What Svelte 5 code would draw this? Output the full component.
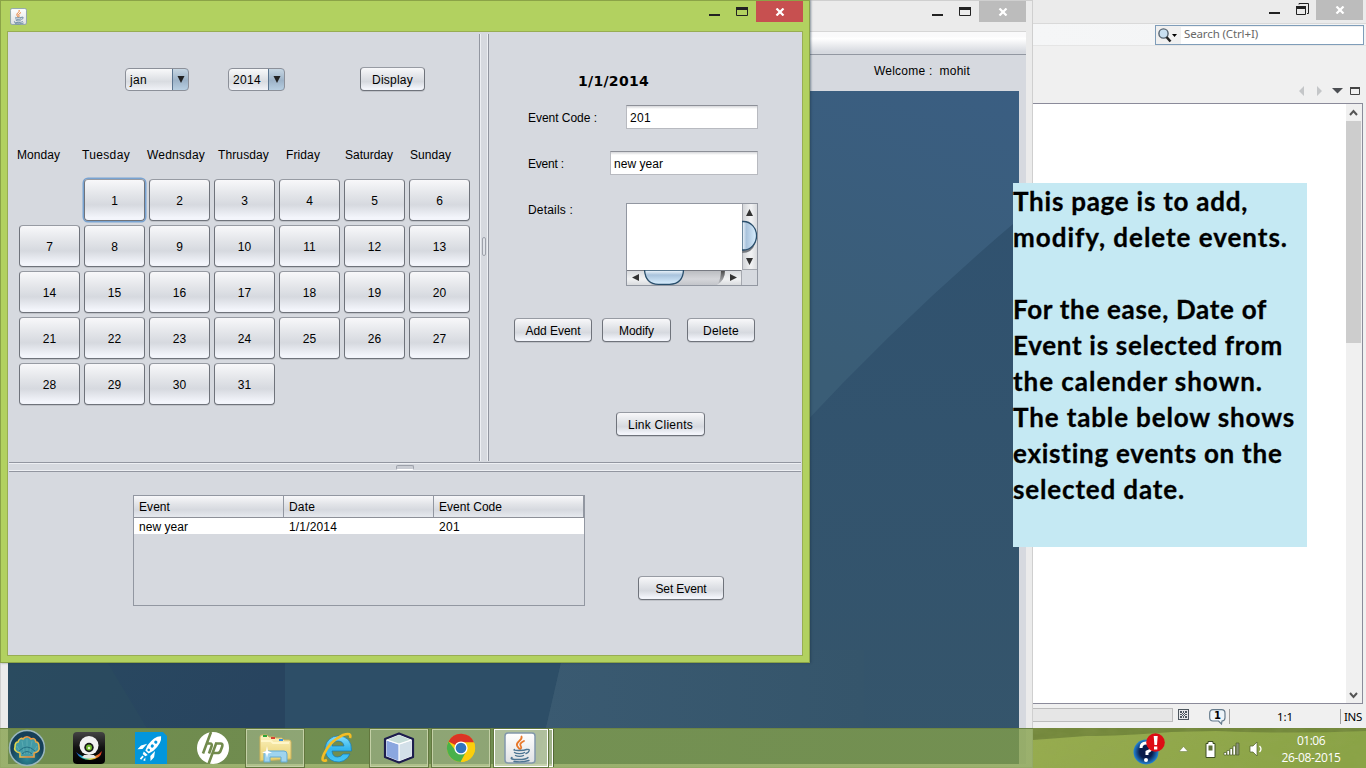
<script>
  const weekdays = [
    { name: 'Monday', w: 43, pad: 0 },
    { name: 'Tuesday', w: 48, pad: 0 },
    { name: 'Wednsday', w: 58, pad: 0 },
    { name: 'Thrusday', w: 51, pad: 6 },
    { name: 'Friday', w: 34, pad: 9 },
    { name: 'Saturday', w: 48, pad: 3 },
    { name: 'Sunday', w: 41, pad: 3 },
  ];
  const days = Array.from({ length: 31 }, (_, i) => i + 1);
  const note = [
    ['This page is to add,', 235],
    ['modify, delete events.', 275],
    ['', 0],
    ['For the ease, Date of', 254],
    ['Event is selected from', 270],
    ['the calender shown.', 250],
    ['The table below shows', 282],
    ['existing events on the', 270],
    ['selected date.', 172],
  ];

  // Tracks a label out or in so that it fills the given width.
  function fit(node, width) {
    if (!width) return;
    const gap = (width - node.getBoundingClientRect().width) / node.textContent.length;
    node.style.letterSpacing = `${gap}px`;
  }
</script>

{#snippet winButtons(kind)}
  <svg class="min" width="12" height="20" viewBox="0 0 12 20"><path d="M0 13h11v2H0z" fill="#222" /></svg>
  <svg class="max" width="14" height="20" viewBox="0 0 14 20">
    {#if kind === 'restore'}
      <path d="M3 5.500V4.500h9.500v10H11" fill="none" stroke="#222" /><path d="M.5 7.500h9v8h-9z" fill="none" stroke="#222" /><path d="M0 7h10v3H0z" fill="#222" />
    {:else}
      <path d="M.5 6.500h11v8h-11z" fill="none" stroke="#222" /><path d="M0 6h12v3H0z" fill="#222" />
    {/if}
  </svg>
  <span class="close {kind}">
    <svg width="10" height="8" viewBox="0 0 10 8"><path d="M1.500 .5l7 7M8.500 .5l-7 7" stroke="#fff" stroke-width="2.200" /></svg>
  </span>
{/snippet}

{#snippet java(size)}
  <svg width={size} height={size} viewBox="0 0 32 32">
    <defs><linearGradient id="jv" x2="0" y2="1"><stop stop-color="#fff" /><stop offset="1" stop-color="#dfe1e3" /></linearGradient></defs>
    <rect x="1" y="1" width="30" height="30" rx="3" fill="url(#jv)" stroke="#8298ac" stroke-width="1.500" />
    <g fill="none" stroke-linecap="round">
      <path d="M17.500 4.500c1.500 4-6 5-4.500 9 .5 1.500 2 2.500 2 3M20 9c-4 2-4.500 3.500-3 5.500.8 1-.2 2-1 2.500" stroke="#e8782a" stroke-width="1.800" />
      <path d="M10.500 17.500c-3 1 9 1.500 12 0M10.500 20.500c2 1.500 8 1.500 10 0M11.500 23.500c2 1.200 6 1.200 8 0M8 25.500c-5 2.500 14 3 16 0M23 17.500c4-1 2 3-1 4M10 29.500c5 .7 11 .3 15-1" stroke="#4d7592" stroke-width="1.400" />
    </g>
  </svg>
{/snippet}

<main>
  <section class="ide">
    <header class="ide-title">{@render winButtons('restore')}</header>
    <div class="ide-tools">
      <div class="search">
        <svg width="24" height="17" viewBox="0 0 24 17"><circle cx="7.500" cy="6.500" r="4.600" fill="#c9dff0" stroke="#556370" stroke-width="1.400" /><path d="M10.500 10l4 4.500" stroke="#222" stroke-width="2.500" /><path d="M16 7h5l-2.500 3z" fill="#000" /></svg>
        <span class="search-text"><span use:fit={74}>Search (Ctrl+I)</span></span>
      </div>
    </div>
    <div class="tab-strip">
      <svg width="64" height="12" viewBox="0 0 64 12">
        <path d="M6 1v10L1 6zM19 1v10l5-5z" fill="#c4c6c8" /><path d="M34 3h11l-5.500 5.500z" fill="#4c4f53" /><path d="M52.500 2.500h9v7h-9z" fill="none" stroke="#444" /><path d="M52 2h10v2H52z" fill="#444" />
      </svg>
    </div>
    <div class="editor">
      <div class="page"></div>
      <div class="vbar">
        <svg width="15" height="17" viewBox="0 0 15 17"><path d="M4 11l3.500-4 3.500 4" fill="none" stroke="#555" stroke-width="2" /></svg>
        <i></i>
        <svg class="down" width="15" height="17" viewBox="0 0 15 17"><path d="M4 7l3.500 4L11 7" fill="none" stroke="#555" stroke-width="2" /></svg>
      </div>
    </div>
    <footer class="status">
      <div class="progress"></div>
      <svg class="cancel" width="11" height="11" viewBox="0 0 11 11"><rect x=".5" y=".5" width="10" height="10" fill="#e6e8ea" stroke="#4d565e" /><path d="M2 2h2v2H2zM5 2h1v2H5zM7 2h2v2H7zM4 4h1v1H4zM6 4h1v1H6zM2 5h2v1H2zM5 5h1v1H5zM7 5h2v1H7zM4 6h1v1H4zM6 6h1v1H6zM2 7h2v2H2zM5 7h1v2H5zM7 7h2v2H7z" fill="#4d565e" /></svg>
      <div class="bubble">
        <svg width="17" height="16" viewBox="0 0 17 16"><path d="M4 .7h8.500q3.500 0 3.500 3.500v4.500q0 3-3 3.300l-.5 3-3-3H4Q.7 12 .7 8.500V4.200Q.7.700 4 .7z" fill="#edf5fa" stroke="#667b8c" stroke-width="1.200" /></svg>
        <b>1</b>
      </div>
      <div class="caret"><span use:fit={16}>1:1</span></div>
      <div class="ins"><span use:fit={18}>INS</span></div>
    </footer>
  </section>

  <section class="client">
    <header class="client-title">{@render winButtons('grey')}</header>
    <div class="client-body">
      <div class="menubar"></div>
      <div class="welcome"><span use:fit={96}>Welcome :&nbsp; mohit</span></div>
      <svg class="backdrop" width="1011" height="673" viewBox="8 91 1011 673" preserveAspectRatio="none">
        <defs>
          <linearGradient id="hi" x1="1" y1="0" x2=".75" y2="1"><stop stop-color="#3a5e82" /><stop offset="1" stop-color="#3a5d76" /></linearGradient>
          <linearGradient id="lo" x2="0" y2="1"><stop stop-color="#2f5170" /><stop offset="1" stop-color="#35556b" /></linearGradient>
          <linearGradient id="lf" x2="1" y2=".4"><stop stop-color="#294a61" /><stop offset="1" stop-color="#28445f" /></linearGradient>
          <linearGradient id="mid"><stop stop-color="#3a5a71" /><stop offset="1" stop-color="#35556b" /></linearGradient>
        </defs>
        <path d="M8 91h1011v673H8z" fill="url(#lo)" />
        <path d="M800 91h219v128Q905 315 800 428z" fill="url(#hi)" />
        <path d="M8 600h277v164H8z" fill="url(#lf)" />
        <path d="M100 650l48 80v34H8V650z" fill="#2c4d60" opacity=".45" />
        <path d="M285 600h290l-14 63-15 65-8 36H285z" fill="#2d4e67" />
        <path d="M564 650h300v114H538l8-36 15-65z" fill="url(#mid)" />
      </svg>
    </div>
  </section>

  <section class="event-win">
    <header class="win-title">
      <span class="app-icon">{@render java(17)}</span>
      {@render winButtons('red')}
    </header>
    <div class="win-body">
      <div class="upper">
        <div class="calendar">
          <div class="pickers">
            <div class="combo month"><span use:fit={17}>jan</span><i><svg width="8" height="7"><path d="M.5 0h7L4 7z" fill="#222" /></svg></i></div>
            <div class="combo year"><span use:fit={28}>2014</span><i><svg width="8" height="7"><path d="M.5 0h7L4 7z" fill="#222" /></svg></i></div>
            <button class="display"><span use:fit={41}>Display</span></button>
          </div>
          <div class="weekdays">
            {#each weekdays as d}
              <div style="padding-left: {d.pad}px"><span use:fit={d.w}>{d.name}</span></div>
            {/each}
          </div>
          <div class="days">
            {#each days as n}
              <button class:focus={n === 1}>{n}</button>
            {/each}
          </div>
        </div>
        <div class="vsplit"><i></i></div>
        <div class="form">
          <h1><span use:fit={71}>1/1/2014</span></h1>
          <div class="field code"><label for="code"><span use:fit={69}>Event Code :</span></label><div id="code" class="input"><span use:fit={21}>201</span></div></div>
          <div class="field name"><label for="name"><span use:fit={36}>Event :</span></label><div id="name" class="input"><span use:fit={49}>new year</span></div></div>
          <div class="field details">
            <label for="details"><span use:fit={45}>Details :</span></label>
            <div id="details" class="area">
              <div class="paper"></div>
              <svg class="sv" width="15" height="66" viewBox="0 0 15 66">
                <defs>
                  <linearGradient id="tr"><stop stop-color="#d0d2d6" /><stop offset=".6" stop-color="#f2f3f4" /><stop offset="1" stop-color="#d9dbde" /></linearGradient>
                  <linearGradient id="tv"><stop stop-color="#f5fbff" /><stop offset=".3" stop-color="#a9c3dc" /><stop offset="1" stop-color="#d9efff" /></linearGradient>
                </defs>
                <path d="M0 0h15v66H0z" fill="url(#tr)" /><path d="M.5 0v66M0 65.500h15" stroke="#a5a8af" />
                <path d="M0 40h13q-3 9-13 9z" fill="#777a80" />
                <path d="M0 17.500h1.500a13 14.200 0 0 1 0 28.500H0z" fill="url(#tv)" stroke="#294e6b" stroke-width="1.300" />
                <path d="M4 12l3.500-7 3.500 7zM4 54l3.500 7 3.500-7z" fill="#333" />
              </svg>
              <svg class="sh" width="115" height="15" viewBox="0 0 115 15">
                <defs>
                  <linearGradient id="trh" x2="0" y2="1"><stop stop-color="#b8babe" /><stop offset=".6" stop-color="#d5d6da" /><stop offset="1" stop-color="#c3c5ca" /></linearGradient>
                  <linearGradient id="btn" x2="0" y2="1"><stop stop-color="#d6d8dc" /><stop offset=".6" stop-color="#f2f3f4" /><stop offset="1" stop-color="#d9dbde" /></linearGradient>
                  <linearGradient id="th" x2="0" y2="1"><stop stop-color="#f5fbff" /><stop offset=".35" stop-color="#a9c3dc" /><stop offset="1" stop-color="#d9efff" /></linearGradient>
                  <linearGradient id="sd" x2="0" y2="1"><stop stop-color="#444" /><stop offset="1" stop-color="#c3c5ca" /></linearGradient>
                </defs>
                <path d="M0 0h115v15H0z" fill="url(#trh)" />
                <path d="M0 0h17q2 12 8 15H0zM98 0h17v15H90q8-5 8-15z" fill="url(#btn)" />
                <path d="M94 0h4q0 10-7 14 3-6 3-14z" fill="url(#sd)" /><path d="M0 .5h115" stroke="#777a82" /><path d="M114.500 0v15" stroke="#a5a8af" />
                <path d="M17.500 0q1 14.300 14 14.300h11Q56 14 56.500 0z" fill="url(#th)" stroke="#294e6b" stroke-width="1.300" />
                <path d="M12 4L5 7.500l7 3.500zM103 4l7 3.500-7 3.500z" fill="#333" />
              </svg>
              <div class="corner"></div>
            </div>
          </div>
          <div class="actions">
            <button class="add"><span use:fit={55}>Add Event</span></button>
            <button class="modify"><span use:fit={35}>Modify</span></button>
            <button class="delete"><span use:fit={36}>Delete</span></button>
          </div>
          <button class="link"><span use:fit={65}>Link Clients</span></button>
        </div>
      </div>
      <div class="hsplit"><i></i></div>
      <div class="lower">
        <div class="table">
          <div class="thead"><div><span use:fit={31}>Event</span></div><div><span use:fit={26}>Date</span></div><div><span use:fit={63}>Event Code</span></div></div>
          <div class="trow"><div><span use:fit={49}>new year</span></div><div><span use:fit={48}>1/1/2014</span></div><div><span use:fit={21}>201</span></div></div>
        </div>
        <button class="set"><span use:fit={51}>Set Event</span></button>
      </div>
    </div>
  </section>

  <aside class="note">
    {#each note as [text, width]}
      <p><span use:fit={width}>{text}</span></p>
    {/each}
  </aside>

  <nav class="taskbar">
    <div class="grass">
      <svg width="333" height="40" viewBox="0 0 333 40" preserveAspectRatio="none">
        <defs>
          <filter id="turf" x="0" y="0" width="100%" height="100%"><feTurbulence type="fractalNoise" baseFrequency=".06 .15" numOctaves="3" seed="4" /><feColorMatrix values="0 0 0 0 .3  0 0 0 0 .38  0 0 0 0 .1  .9 0 0 0 -.3" /></filter>
          <linearGradient id="gr" x2="1" y2=".1"><stop stop-color="#97ac4f" /><stop offset="1" stop-color="#8aa346" /></linearGradient>
        </defs>
        <path d="M0 0h333v40H0z" fill="url(#gr)" />
        <path d="M0 0h333v3q-80 3-150 0l-45 1q-50 4-85 4L0 12z" fill="#6c8038" opacity=".8" />
        <path d="M0 0h333v40H0z" filter="url(#turf)" opacity=".4" />
      </svg>
    </div>
    <div class="slot orb">
      <svg width="38" height="38" viewBox="0 0 38 38">
        <defs><radialGradient id="ob" cy=".8"><stop stop-color="#2c8796" /><stop offset="1" stop-color="#153f58" /></radialGradient><linearGradient id="shell"><stop stop-color="#e3dd4d" /><stop offset=".55" stop-color="#f08a3c" /><stop offset="1" stop-color="#e9b649" /></linearGradient></defs>
        <circle cx="19" cy="19" r="17.500" fill="url(#ob)" stroke="#9ab7bd" stroke-width="1.500" />
        <path d="M12 28v-4c-5-1-6-4-5-6 0-4 2-5 3-5 1-4 4-4 5-3 2-3 6-3 8 0 2-1 4-1 5 3 2 0 3 2 3 5 1 3-1 5-5 6v4z" fill="#439aa5" stroke="url(#shell)" stroke-width="1.600" />
        <path d="M14 26L9 17M16.500 25L14 12M19 25V10M21.500 25L24 12M24 26l5-9" stroke="#6ab5ba" stroke-width=".6" /><path d="M11 22q8-8 16 0M14 25q5-5 10 0" fill="none" stroke="#236f82" />
      </svg>
    </div>
    <div class="slot cam">
      <svg width="32" height="32" viewBox="0 0 32 32">
        <defs><linearGradient id="cm" x2="0" y2="1"><stop stop-color="#444" /><stop offset=".5" stop-color="#111" /><stop offset="1" /></linearGradient><linearGradient id="rb"><stop stop-color="#204ed8" /><stop offset=".3" stop-color="#23c5bb" /><stop offset=".6" stop-color="#e7d734" /><stop offset="1" stop-color="#e02b20" /></linearGradient></defs>
        <rect width="32" height="32" rx="4" fill="url(#cm)" />
        <path d="M3 20q4 8 14 8 11-1 12-9-5 6-13 6-8 0-13-5z" fill="url(#rb)" />
        <circle cx="16" cy="13.500" r="9.500" fill="#f1f1f1" /><path d="M11 23h10l2 2.500q-7 2-14 0z" fill="#e6e6e6" /><circle cx="16" cy="15.500" r="4.700" fill="#181818" /><circle cx="16" cy="15.500" r="3" fill="#6ab52b" /><circle cx="16" cy="16" r="1.300" fill="#eafbd0" />
      </svg>
    </div>
    <div class="slot rocket">
      <svg width="32" height="32" viewBox="0 0 32 32">
        <path d="M0 0h28l4 4v28H0z" fill="#0296dc" />
        <g transform="translate(15.500 16) rotate(42) scale(.88) translate(-16 -17)"><path d="M16-1q6 5 4.500 18l-2 6h-5l-2-6Q10 4 16-1zM10 16v8l-4 4v-6zM22 16v8l4 4v-6zM13 25h6l-1 3h-4zM11.500 29l1.500 4M15.500 29.500h1.500v4.500h-2v-4.500zM19 29l2.500 3-2.500 1z" fill="#fff" /><circle cx="16" cy="8" r="1.800" fill="#0296dc" /><circle cx="16" cy="14" r="1.800" fill="#0296dc" /><circle cx="16" cy="20" r="1.500" fill="#0296dc" /></g>
      </svg>
    </div>
    <div class="slot hp">
      <svg width="32" height="32" viewBox="0 0 32 32"><circle cx="16" cy="16" r="16" fill="#fff" /><g fill="none" stroke="#718a4c" stroke-width="2.600"><path d="M14 0L6 21.500M9.500 11.500h3.500q2.500 0 1.500 3L12 21.500M19.500 10.500L11.500 32M19 11.500h4.500q2.500 0 1.700 3l-1.500 4q-.8 2.500-3.200 2.500H16" /></g></svg>
    </div>
    <div class="slot task files">
      <svg width="34" height="30" viewBox="0 0 34 30">
        <defs><linearGradient id="fo" x2="0" y2="1"><stop stop-color="#fbf2c2" /><stop offset="1" stop-color="#e9cf68" /></linearGradient></defs>
        <path d="M2 28V4q0-2 2-2h5l2 2h5l2 1h6l2 2h5q2 0 2 2v17z" fill="url(#fo)" stroke="#cfb45c" /><path d="M5 2h4v2H5z" fill="#2aa536" /><path d="M13 4h4v2h-4z" fill="#d74133" /><path d="M21 6h4v2h-4z" fill="#3a93df" /><path d="M3 8h10l2 2h16" fill="none" stroke="#fff6c8" stroke-width="2" />
        <path d="M6 29V21q0-3 3-3h17q3 0 3 3v8h-6v-5H12v5z" fill="#9fd4ee" stroke="#65aad0" /><path d="M9 13l1 5 4 1.500-4 1L9 25l-1-4.500-4-1 4-1.500z" fill="#fff" />
      </svg>
    </div>
    <div class="slot ie">
      <svg width="32" height="32" viewBox="0 0 32 32">
        <defs><linearGradient id="ei" x2="0" y2="1"><stop stop-color="#83defc" /><stop offset=".5" stop-color="#33b5ee" /><stop offset="1" stop-color="#46c6f7" /></linearGradient></defs>
        <path d="M17 4a13 13 0 1 0 12 18h-7q-2 3-5.500 3-5 0-5.500-6h19.500Q31 4 17 4zm-6 10q1-5 6-5t6 5z" fill="url(#ei)" stroke="#1679b5" stroke-width=".7" />
        <path d="M6 28Q-1 31 3 22 9 9 22 3q9-3 7 3" fill="none" stroke="#f4bd24" stroke-width="2.600" />
      </svg>
    </div>
    <div class="slot task cube">
      <svg width="32" height="32" viewBox="0 0 32 32"><path d="M16 1.500l14 5.500v18L16 30.500 2 25V7z" fill="#fff" stroke="#1c1d4d" stroke-width="2.200" stroke-linejoin="round" /><path d="M16 3l12 5-12 4L4 8z" fill="#c5dcd8" /><path d="M3.500 8.500L16 12.500v16.500L3.500 24z" fill="#8ba7df" /><path d="M28.500 8.500L16 12.500v16.500L28.500 24z" fill="#d3e0e9" /><path d="M16 12v17M4 8l12 4 12-4" stroke="#fff" stroke-width="1.200" fill="none" /></svg>
    </div>
    <div class="slot task chrome">
      <svg width="30" height="30" viewBox="-15 -15 30 30">
        <circle r="14" fill="#fbce0c" /><path d="M0 0L-12.500-6.500A14 14 0 0 1 13-5.500H0z" fill="#dc3425" /><path d="M-12.500-6.500A14 14 0 0 0 0 14L6 3-5 3z" fill="#49b14b" /><path d="M6 2L-.5 14A14 14 0 0 0 13-5.500H2z" fill="#fbce0c" /><circle r="6.600" fill="#fff" /><circle r="5.300" fill="#3074be" />
      </svg>
    </div>
    <div class="slot task active">{@render java(32)}</div>
    <div class="stack"></div>
    <div class="tray">
      <svg class="help" width="33" height="32" viewBox="0 0 33 32">
        <defs><radialGradient id="hb"><stop offset=".5" stop-color="#0a1c4b" /><stop offset="1" stop-color="#2285d8" /></radialGradient></defs>
        <circle cx="13" cy="19" r="12.500" fill="url(#hb)" /><path d="M8 15q0-5 5-5 6 0 6 4 0 3-5 5v3" fill="none" stroke="#fff" stroke-width="3" /><circle cx="13" cy="27" r="2" fill="#fff" />
        <circle cx="22.500" cy="9.500" r="9.300" fill="#dd0d15" /><path d="M20.700 3h4l-.7 9h-2.600zM21 13.500h3.300v3H21z" fill="#fff" />
      </svg>
      <svg class="chev" width="9" height="6" viewBox="0 0 9 6"><path d="M0 5.500L4.500.5 9 5.500z" fill="#fff" stroke="#65763b" stroke-width=".5" /></svg>
      <svg class="status-icons" width="59" height="18" viewBox="0 0 59 18">
        <path d="M3 .5h5v2h2v14H1v-14h2z" fill="#fff" stroke="#3f4f22" /><path d="M3.500 4.500h4v5h-4z" fill="#5d7035" />
        <g fill="#fff" stroke="#4e5f2d" stroke-width=".7"><path d="M19 11.500h2.500V14H19zM22 9.500h2.500V14H22zM25 7.500h2.500V14H25zM28 5h2.500v9H28z" /><path d="M31 2h3v12h-3z" fill="#8a9278" /><path d="M45 5h3l4-4v14l-4-4h-3z" /></g>
        <path d="M54.500 5q3 3 0 6" fill="none" stroke="#fff" stroke-width="1.300" />
      </svg>
      <div class="clock"><div><span use:fit={28}>01:06</span></div><div><span use:fit={59}>26-08-2015</span></div></div>
    </div>
  </nav>
</main>

<style>
  :global(body) { margin: 0; overflow: hidden; }
  main { position: relative; width: 1366px; height: 768px; overflow: hidden; background: #f0f0f0; font: 12px/16px "Liberation Sans", Arial, sans-serif; color: #000; }
  main :global(*) { box-sizing: border-box; }
  main svg { display: block; flex: none; }
  span { display: inline-block; white-space: nowrap; }
  .ide, .client, .event-win, .note, .taskbar { position: absolute; }

  .close { display: flex; align-items: center; justify-content: center; width: 47px; height: 21px; }
  .close.red { background: #c75050; }
  .close.grey, .close.restore { background: #bcbcbc; }
  .close.restore { height: 20px; padding-bottom: 1px; }
  .min { margin-right: 15px; }
  .max { margin-right: 6px; }

  .ide { left: 1033px; top: 0; width: 333px; height: 728px; display: flex; flex-direction: column; background: #f0f0f0; }
  .ide-title { display: flex; justify-content: flex-end; height: 24px; padding-right: 3px; background: #ebebeb; border-bottom: 1px solid #d9d9d9; }
  .ide-title :global(.min), .ide-title :global(.max) { margin-top: -1px; }
  .ide-tools { display: flex; justify-content: flex-end; height: 22px; padding: 1px 2px 0 0; background: linear-gradient(90deg, #f5f6f7, #f3f4f5); border-bottom: 1px solid #e5e5e5; }
  .search { display: flex; width: 209px; height: 20px; border: 1px solid #7f9db9; background: #f0f0f0; padding-top: 1px; }
  .search-text { flex: 1; background: #fff; padding: 0 0 0 3px; color: #686868; font: 11.500px/14px "Noto Sans", sans-serif; margin-left: 1px; }
  .tab-strip { height: 57px; display: flex; justify-content: flex-end; padding: 39px 4px 0 0; }
  .editor { width: 330px; height: 601px; display: flex; border: 1px solid #8b8b9a; border-left: 0; background: #fff; }
  .page { flex: 1; }
  .vbar { width: 16px; background: #f0f0f0; display: flex; flex-direction: column; }
  .vbar i { height: 222px; width: 15px; background: #cdcdcd; }
  .vbar .down { margin-top: auto; }
  .status { display: flex; height: 24px; padding-top: 4px; }
  .progress { width: 140px; height: 14px; border: 1px solid #bcbcbc; border-left: 0; background: #e6e6e6; }
  .cancel { margin: 1px 0 0 5px; }
  .bubble { position: relative; margin: 1px 0 0 20px; width: 21px; border-right: 1px solid #a0a0a0; height: 15px; }
  .bubble b { position: absolute; left: 5px; top: 0; font: bold 10px/13px "DejaVu Sans", sans-serif; }
  .caret { width: 111px; text-align: center; border-right: 1px solid #a0a0a0; height: 15px; margin-top: 1px; font: 11.500px/16px "Noto Sans", sans-serif; }
  .ins { padding-left: 3px; margin-top: 1px; font: 11.500px/16px "Noto Sans", sans-serif; }

  .client { left: 0; top: 0; width: 1033px; height: 768px; background: #ebebeb; border: 1px solid #cfcfcf; padding: 0 6px 0 7px; }
  .client-title { display: flex; justify-content: flex-end; height: 30px; }
  .client-body { border-top: 1px solid #d6d6d6; background: #d6d9df; }
  .menubar { height: 23px; background: linear-gradient(#fafafb 0 20%, #fff 30%, #d6d9df 90%); border-bottom: 1px solid #9297a1; }
  .welcome { height: 36px; padding: 8px 0 0 866px; }

  .event-win { left: 0; top: 0; width: 810px; height: 663px; background: #b2d160; border: 1px solid #8ba347; padding: 0 6px; box-shadow: 1px 0 2px #1b314780; }
  .win-title { display: flex; height: 30px; }
  .app-icon { margin: 7px auto 0 2.500px; }
  .win-body { width: 796px; height: 625px; border: 1px solid #98ad52; background: #d6d9df; }
  .upper { display: flex; height: 430px; }
  .calendar { width: 471px; }
  .pickers { display: flex; padding: 35px 0 0 117px; height: 59px; }
  .combo { display: flex; height: 23px; margin-top: 1px; border: 1px solid #8c9099; border-radius: 4px; background: linear-gradient(#f8f9fa, #d9dce1 60%, #f0f2f7); overflow: hidden; line-height: 22px; padding-left: 4px; }
  .combo i { display: flex; align-items: center; justify-content: center; width: 17px; margin: -1px -1px -1px auto; padding-bottom: 1px; border: 1px solid #5b7590; border-radius: 0 4px 4px 0; background: linear-gradient(#c7d6e2, #9db3c8 55%, #b8cfe2); }
  .month { width: 64px; }
  .year { width: 57px; margin-left: 39px; }
  button { margin: 0; padding: 1px 0 0; border: 1px solid #6f737b; border-top-color: #979ba3; border-radius: 4px; background: linear-gradient(#f8f8fa, #e4e6ea 35%, #d6d9df 62%, #f3f5fb 94%); font: inherit; line-height: 22px; color: #000; box-shadow: 0 1px 0 #bfc2c8; height: 24px; display: block; }
  .display { width: 65px; margin-left: 75px; }
  .weekdays { display: grid; grid-template-columns: repeat(7, 65px); margin: 56px 0 0 9px; height: 32px; }
  .days { display: grid; grid-template-columns: repeat(7, 61px); gap: 4px; padding-left: 11px; }
  .days button { height: 42px; line-height: 40px; }
  .days button:first-child { grid-column: 2; }
  .days .focus { box-shadow: 0 0 0 1.500px #78a3d2; }
  .vsplit { width: 10px; height: 427px; margin-top: 2px; border: solid #9296a0; border-width: 0 1px; box-shadow: inset 1px 0 #edeff3, inset -1px 0 #edeff3; display: flex; align-items: center; justify-content: center; }
  .vsplit i { width: 4px; height: 19px; border: 1px solid #9da1aa; border-radius: 2px; background: #dfe2e8; margin-top: -3px; }
  .form { flex: 1; }
  h1 { margin: 40px 0 0 89px; height: 33px; font: bold 14px/18px "DejaVu Sans", sans-serif; }
  .field { display: flex; padding-left: 39px; height: 46px; }
  .field label { padding-top: 5px; }
  .input { height: 24px; margin: 0 44px 0 auto; border: 1px solid #b8bac0; border-top: 1px solid #8d9098; background: linear-gradient(#d5d6d9, #fff 3px); padding: 4px 0 0 3px; }
  .code .input { width: 132px; }
  .name .input { width: 148px; }
  .name { height: 52px; }
  .details { height: 115px; }
  .details label { margin-top: -1px; padding-top: 0; }
  .area { display: grid; grid-template: 66px 15px / 115px 15px; width: 132px; height: 83px; margin: 0 44px 0 auto; border: 1px solid #9297a1; }
  .paper { background: #fff; }
  .actions { display: flex; padding-left: 25px; }
  .add { width: 78px; }
  .modify { width: 69px; margin-left: 10px; }
  .delete { width: 68px; margin-left: 16px; }
  .link { width: 89px; margin: 70px 0 0 127px; }
  .hsplit { height: 10px; margin: 0 1px; border: solid #9296a0; border-width: 1px 0; box-shadow: inset 0 1px #edeff3, inset 0 -1px #edeff3; display: flex; align-items: center; justify-content: center; }
  .hsplit i { width: 18px; height: 5px; border: 1px solid #9da1aa; border-bottom-color: #fff; border-radius: 2px; background: #c9ccd3; }
  .lower { display: flex; padding: 23px 0 0 125px; }
  .table { width: 452px; height: 111px; border: 1px solid #9297a1; }
  .thead, .trow { display: grid; grid-template-columns: 150px 150px 150px; }
  .thead { height: 22px; background: linear-gradient(#f8f8fa, #e2e4e8 40%, #d6d9df 65%, #e6e9ee); border-bottom: 1px solid #8d9098; line-height: 23px; }
  .thead div { padding-left: 5px; border-right: 1px solid #9297a1; height: 21px; }
  .trow { height: 16px; background: #fff; line-height: 19px; }
  .trow div { padding-left: 5px; }
  .set { width: 86px; margin: 81px 0 0 53px; }

  .note { left: 1013px; top: 183px; width: 294px; height: 364px; background: #c5e9f3; font: bold 26px/36px Lato, sans-serif; -webkit-text-stroke: .3px #000; }
  .note p { margin: 0; height: 36px; }

  .taskbar { left: 0; top: 728px; width: 1366px; height: 40px; display: flex; background: linear-gradient(#6c8444 0 1px, rgba(132, 160, 74, .78) 1px); }
  .grass { position: absolute; left: 1033px; top: 0; z-index: 0; }
  .slot { display: flex; align-items: center; justify-content: center; width: 62px; height: 39px; flex: none; }
  .orb { width: 38px; margin-left: 8px; }
  .cam { width: 32px; margin-left: 27px; }
  .rocket, .hp, .ie { width: 32px; margin-left: 30px; }
  .task { width: 58px; height: 38px; margin-top: 1px; background: #ffffff35; border: 1px solid #c3d0a6; box-shadow: 0 0 0 1px #62773e; }
  .files { margin-left: 17px; }
  .ie { margin-left: 17px; }
  .cube { margin-left: 17px; }
  .chrome { margin-left: 4px; }
  .active { width: 54px; margin-left: 4px; padding-right: 2px; border: 1px solid #fff; background: #ffffff70; }
  .stack { width: 4px; height: 38px; margin: 1px 0 0 1px; border: 1px solid #fff; border-left: 0; background: #ffffff50; box-shadow: 1px 0 #536735; }
  .tray { position: relative; z-index: 1; display: flex; margin-left: auto; color: #fff; }
  .help { margin: 5px 13px 0 0; }
  .chev { margin: 18px 17px 0 0; }
  .status-icons { margin: 13px 16px 0 0; }
  .clock { width: 62px; margin: 4px 24px 0 0; text-align: center; font: 12px/17px "Open Sans", sans-serif; }
</style>
